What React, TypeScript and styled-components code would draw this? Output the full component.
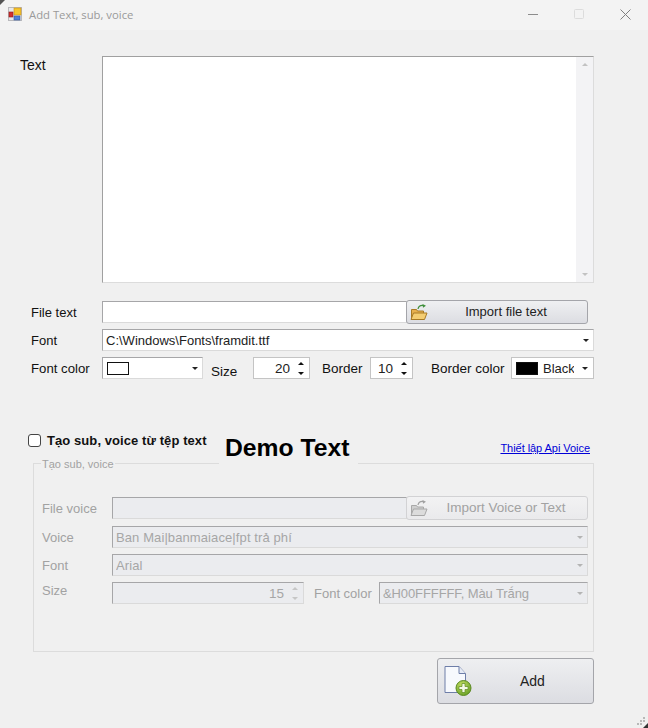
import React from 'react';
import styled, { createGlobalStyle } from 'styled-components';

const GlobalStyle = createGlobalStyle`
  html, body {
    margin: 0;
    padding: 0;
    background: #f0f0f0;
  }
  * {
    box-sizing: border-box;
  }
`;

const Window = styled.div`
  position: relative;
  width: 648px;
  height: 728px;
  overflow: hidden;
  background: #f0f0f0;
  color: #111;
  font-family: 'Liberation Sans', Arial, sans-serif;
  font-size: 13px;
`;

const TitleBar = styled.div`
  display: flex;
  align-items: center;
  height: 30px;
  padding: 0 0 2px 8px;
  background: #f3f3f3;
`;

const TitleText = styled.span`
  margin-left: 7px;
  font-family: 'Open Sans', sans-serif;
  font-size: 11.3px;
  color: #9a9a9a;
`;

const TitleButtons = styled.div`
  display: flex;
  margin-left: auto;
`;

const TitleButton = styled.div`
  display: flex;
  align-items: center;
  justify-content: center;
  width: 46px;
  height: 28px;
`;

const Content = styled.div`
  display: flex;
  flex-direction: column;
  padding-right: 54px;
`;

const TextSection = styled.div`
  display: flex;
  margin-top: 26px;
  padding-left: 20px;
`;

const TextLabel = styled.div`
  width: 82px;
  padding-top: 1px;
  font-size: 14px;
  line-height: 16px;
`;

const TextBox = styled.div`
  display: flex;
  justify-content: flex-end;
  width: 492px;
  height: 227px;
  background: #fff;
  border: 1px solid #a0a0a0;
  border-right-color: #dcdcdc;
  border-bottom-color: #dcdcdc;
`;

const ScrollBar = styled.div`
  display: flex;
  flex-direction: column;
  justify-content: space-between;
  align-items: center;
  width: 17px;
  padding: 6px 0;
  background: #f3f3f5;
`;

const Rows = styled.div`
  display: flex;
  flex-direction: column;
  gap: 6px;
  margin-top: 18px;
  padding-left: 31px;
`;

const Row = styled.div<{ $below?: number }>`
  display: flex;
  align-items: center;
  height: 22px;
  margin-bottom: ${(p) => p.$below ?? 0}px;
`;

const Label = styled.span<{ $width?: number; $muted?: boolean; $shift?: number; $gap?: number; $size?: number }>`
  flex: none;
  width: ${(p) => (p.$width ? `${p.$width}px` : 'auto')};
  margin-left: ${(p) => p.$gap ?? 0}px;
  color: ${(p) => (p.$muted ? '#a2a2a2' : '#111')};
  font-size: ${(p) => p.$size ?? 13}px;
  white-space: nowrap;
  transform: translateY(${(p) => p.$shift ?? 0}px);
`;

const Field = styled.div<{ $width: number; $disabled?: boolean; $flat?: boolean }>`
  flex: none;
  display: flex;
  align-items: center;
  width: ${(p) => p.$width}px;
  height: 22px;
  padding: 0 4px 0 3px;
  background: ${(p) => (p.$disabled ? '#ebecef' : '#fff')};
  border: 1px solid ${(p) => (p.$flat ? '#c4c4c4' : '#a6a6a8')};
  border-right-color: ${(p) => (p.$flat ? '#c4c4c4' : '#dadada')};
  border-bottom-color: ${(p) => (p.$flat ? '#c4c4c4' : '#dadada')};
  color: ${(p) => (p.$disabled ? '#a6a6a6' : '#222')};
  white-space: nowrap;
  overflow: hidden;
`;

const FieldText = styled.span<{ $clip?: number; $spacing?: number }>`
  flex: ${(p) => (p.$clip ? 'none' : 1)};
  width: ${(p) => (p.$clip ? `${p.$clip}px` : 'auto')};
  margin-right: ${(p) => (p.$clip ? 8 : 0)}px;
  letter-spacing: ${(p) => p.$spacing ?? 0}px;
  overflow: hidden;
`;

const SpinText = styled.span`
  flex: 1;
  padding-right: 6px;
  font-size: 13.5px;
  text-align: right;
`;

const Spin = styled.div`
  flex: none;
  display: flex;
  flex-direction: column;
  align-items: center;
  gap: 7px;
  width: 10px;
  margin-right: -1px;
`;

const Arrow = styled.i<{ $down?: boolean; $color: string; $size?: number }>`
  display: block;
  flex: none;
  width: 0;
  height: 0;
  border-left: ${(p) => p.$size ?? 3.5}px solid transparent;
  border-right: ${(p) => p.$size ?? 3.5}px solid transparent;
  ${(p) => (p.$down ? 'border-top' : 'border-bottom')}: 3.5px solid ${(p) => p.$color};
`;

const Swatch = styled.span<{ $fill: string }>`
  flex: none;
  display: block;
  width: 22px;
  height: 13px;
  margin: 0 5px 0 1px;
  background: ${(p) => p.$fill};
  border: 1px solid #111;
`;

const ImportButton = styled.div<{ $disabled?: boolean }>`
  flex: none;
  display: flex;
  align-items: center;
  width: 182px;
  height: 24px;
  margin-left: -1px;
  padding-left: 3px;
  background: ${(p) =>
    p.$disabled
      ? 'linear-gradient(#f2f2f3, #eaeaec)'
      : 'linear-gradient(#eff0f2, #dcdde2)'};
  border: 1px solid ${(p) => (p.$disabled ? '#d2d2d4' : '#a4a5aa')};
  border-radius: 3px;
  color: ${(p) => (p.$disabled ? '#a2a2a2' : '#222')};
`;

const ButtonText = styled.span<{ $size: number }>`
  flex: 1;
  padding: 0 3px 2px 0;
  font-size: ${(p) => p.$size}px;
  text-align: center;
`;

const ToggleBar = styled.div`
  display: flex;
  align-items: flex-start;
  height: 32px;
  margin-top: 53px;
  padding-left: 28px;
`;

const CheckBox = styled.span`
  flex: none;
  width: 13px;
  height: 13px;
  margin-top: 2px;
  background: #fff;
  border: 1px solid #444;
  border-radius: 3px;
`;

const CheckLabel = styled.span`
  width: 160px;
  margin-left: 6px;
  font-weight: bold;
  font-size: 13px;
  line-height: 18px;
  letter-spacing: 0.08px;
  white-space: nowrap;
`;

const DemoText = styled.span`
  position: relative;
  z-index: 1;
  height: 33px;
  margin-left: 12px;
  padding: 0 9px 0 6px;
  background: #f0f0f0;
  color: #000;
  font-size: 24.7px;
  font-weight: bold;
  line-height: 32px;
  white-space: nowrap;
`;

const ApiLink = styled.a`
  margin-left: auto;
  margin-right: 4px;
  padding-top: 9px;
  color: #0000d8;
  font-size: 11px;
  line-height: 14px;
  letter-spacing: -0.05px;
  text-decoration: underline;
`;

const GroupBox = styled.div`
  position: relative;
  display: flex;
  flex-direction: column;
  gap: 6px;
  height: 189px;
  margin: -1px 0 0 33px;
  padding: 33px 0 0 8px;
  border: 1px solid #dcdcdc;
`;

const Legend = styled.span`
  position: absolute;
  top: -6px;
  left: 7px;
  padding: 0 1px;
  background: #f0f0f0;
  color: #a2a2a2;
  font-size: 11px;
  line-height: 13px;
`;

const AddButton = styled.div`
  display: flex;
  align-items: center;
  align-self: flex-end;
  width: 157px;
  height: 46px;
  margin-top: 6px;
  padding-left: 6px;
  background: linear-gradient(#eeeff1, #dcdde2);
  border: 1px solid #a4a5aa;
  border-radius: 3px;
  color: #222;
  font-size: 14px;
`;

const AddLabel = styled.span`
  margin-left: 48px;
`;

const Grip = styled.svg`
  position: absolute;
  right: 0;
  bottom: 0;
`;

const Corner = styled.svg`
  position: absolute;
  top: 0;
  left: 0;
`;

const AppIcon = () => (
  <svg width="14" height="14" viewBox="0 0 14 14">
    <rect x="0.5" y="0.5" width="13" height="13" fill="#e8e8ea" stroke="#b9b9bd" />
    <rect x="6" y="1" width="7" height="7" fill="#f6c52d" stroke="#c98e12" strokeWidth="0.6" />
    <rect x="1" y="5" width="4" height="5" fill="#d22f2f" stroke="#8e1b1b" strokeWidth="0.6" />
    <rect x="6" y="9" width="6" height="4" fill="#4f80d8" stroke="#2c559e" strokeWidth="0.6" />
  </svg>
);

const FolderIcon = ({ disabled }: { disabled?: boolean }) => {
  const body = disabled ? '#dcdcdc' : '#f4cd72';
  const back = disabled ? '#cfcfcf' : '#e7b04e';
  const line = disabled ? '#a8a8a8' : '#a87a24';
  const tip = disabled ? '#a0a0a0' : '#3f8f3c';
  return (
    <svg width="18" height="17" viewBox="0 0 18 17">
      <path d="M1.5 5.5h5l1 1.5h6v8h-12z" fill={back} stroke={line} />
      <path d="M3.5 9h13.5l-2.5 6.5H1z" fill={body} stroke={line} />
      <path d="M8 5C8.5 2.5 11 1.2 13.5 1.5" fill="none" stroke={tip} strokeWidth="1.2" />
      <path d="M12.5 0l3.5 1.7-3 2z" fill={tip} />
    </svg>
  );
};

const AddIcon = () => (
  <svg width="28" height="34" viewBox="0 0 28 34">
    <defs>
      <radialGradient id="addGreen" cx="0.4" cy="0.3" r="0.8">
        <stop offset="0" stopColor="#c4de62" />
        <stop offset="1" stopColor="#5f9a20" />
      </radialGradient>
    </defs>
    <path d="M1 2.5h14l6.5 7v19H1z" fill="#f7f9fd" stroke="#6e7ea8" />
    <path d="M15 2.5v7h6.5" fill="#e6ebf5" stroke="#6e7ea8" />
    <circle cx="19.5" cy="24" r="7.5" fill="url(#addGreen)" stroke="#5c8a22" />
    <path d="M18 19.5h3v3h3v3h-3v3h-3v-3h-3v-3h3z" fill="#f4f9e6" stroke="#5c8a22" strokeWidth="0.7" />
  </svg>
);

const Spinner = ({ muted }: { muted?: boolean }) => (
  <Spin>
    <Arrow $color={muted ? '#c6c6c6' : '#111'} />
    <Arrow $down $color={muted ? '#c6c6c6' : '#111'} />
  </Spin>
);

const Caret = ({ muted }: { muted?: boolean }) => (
  <Arrow $down $size={3.5} $color={muted ? '#b4b4b4' : '#222'} />
);

export default function App() {
  return (
    <Window>
      <GlobalStyle />
      <Corner width="6" height="6" viewBox="0 0 6 6">
        <path d="M0 0h5L0 5z" fill="#555" />
      </Corner>
      <TitleBar>
        <AppIcon />
        <TitleText>Add Text, sub, voice</TitleText>
        <TitleButtons>
          <TitleButton>
            <svg width="10" height="10" viewBox="0 0 10 10">
              <path d="M0 5.5h10" stroke="#8c8c8c" />
            </svg>
          </TitleButton>
          <TitleButton>
            <svg width="10" height="10" viewBox="0 0 10 10">
              <rect x="0.5" y="0.5" width="9" height="9" rx="1" fill="none" stroke="#dcdcdc" />
            </svg>
          </TitleButton>
          <TitleButton>
            <svg width="11" height="11" viewBox="0 0 11 11">
              <path d="M0.5 0.5l10 10M10.5 0.5l-10 10" stroke="#808080" />
            </svg>
          </TitleButton>
        </TitleButtons>
      </TitleBar>

      <Content>
        <TextSection>
          <TextLabel>Text</TextLabel>
          <TextBox>
            <ScrollBar>
              <Arrow $color="#c2c2c2" />
              <Arrow $down $color="#c2c2c2" />
            </ScrollBar>
          </TextBox>
        </TextSection>

        <Rows>
          <Row>
            <Label $width={71}>File text</Label>
            <Field $width={305} />
            <ImportButton>
              <FolderIcon />
              <ButtonText $size={13}>Import file text</ButtonText>
            </ImportButton>
          </Row>
          <Row>
            <Label $width={71}>Font</Label>
            <Field $width={492}>
              <FieldText>C:\Windows\Fonts\framdit.ttf</FieldText>
              <Caret />
            </Field>
          </Row>
          <Row>
            <Label $width={71} $size={13.2}>
              Font color
            </Label>
            <Field $width={101}>
              <Swatch $fill="#fff" />
              <FieldText />
              <Caret />
            </Field>
            <Label $width={42} $shift={3} $gap={8} $size={13.5}>
              Size
            </Label>
            <Field $width={57} $flat>
              <SpinText>20</SpinText>
              <Spinner />
            </Field>
            <Label $width={48} $gap={12} $size={13.5}>
              Border
            </Label>
            <Field $width={43} $flat>
              <SpinText>10</SpinText>
              <Spinner />
            </Field>
            <Label $width={80} $gap={18} $size={13.5}>
              Border color
            </Label>
            <Field $width={83} $flat>
              <Swatch $fill="#000" />
              <FieldText $clip={31}>Black</FieldText>
              <Caret />
            </Field>
          </Row>
        </Rows>

        <ToggleBar>
          <CheckBox />
          <CheckLabel>Tạo sub, voice từ tệp text</CheckLabel>
          <DemoText>Demo Text</DemoText>
          <ApiLink>Thiết lập Api Voice</ApiLink>
        </ToggleBar>

        <GroupBox>
          <Legend>Tạo sub, voice</Legend>
          <Row $below={1}>
            <Label $muted $width={70}>
              File voice
            </Label>
            <Field $disabled $width={295} />
            <ImportButton $disabled>
              <FolderIcon disabled />
              <ButtonText $size={13.5}>Import Voice or Text</ButtonText>
            </ImportButton>
          </Row>
          <Row>
            <Label $muted $width={70}>
              Voice
            </Label>
            <Field $disabled $width={476}>
              <FieldText $spacing={0.1}>Ban Mai|banmaiace|fpt trả phí</FieldText>
              <Caret muted />
            </Field>
          </Row>
          <Row>
            <Label $muted $width={70}>
              Font
            </Label>
            <Field $disabled $width={476}>
              <FieldText $spacing={0.1}>Arial</FieldText>
              <Caret muted />
            </Field>
          </Row>
          <Row>
            <Label $muted $width={70} $shift={-3}>
              Size
            </Label>
            <Field $disabled $width={192}>
              <SpinText>15</SpinText>
              <Spinner muted />
            </Field>
            <Label $muted $width={65} $gap={10}>
              Font color
            </Label>
            <Field $disabled $width={209}>
              <FieldText $spacing={-0.1}>&amp;H00FFFFFF, Màu Trắng</FieldText>
              <Caret muted />
            </Field>
          </Row>
        </GroupBox>

        <AddButton>
          <AddIcon />
          <AddLabel>Add</AddLabel>
        </AddButton>
      </Content>

      <Grip width="14" height="14" viewBox="0 0 14 14">
        <g fill="#b8b8b8">
          <rect x="9" y="3" width="2" height="2" />
          <rect x="6" y="6" width="2" height="2" />
          <rect x="9" y="6" width="2" height="2" />
          <rect x="3" y="9" width="2" height="2" />
          <rect x="6" y="9" width="2" height="2" />
        </g>
        <path d="M14 9v5H9z" fill="#333" />
      </Grip>
    </Window>
  );
}
